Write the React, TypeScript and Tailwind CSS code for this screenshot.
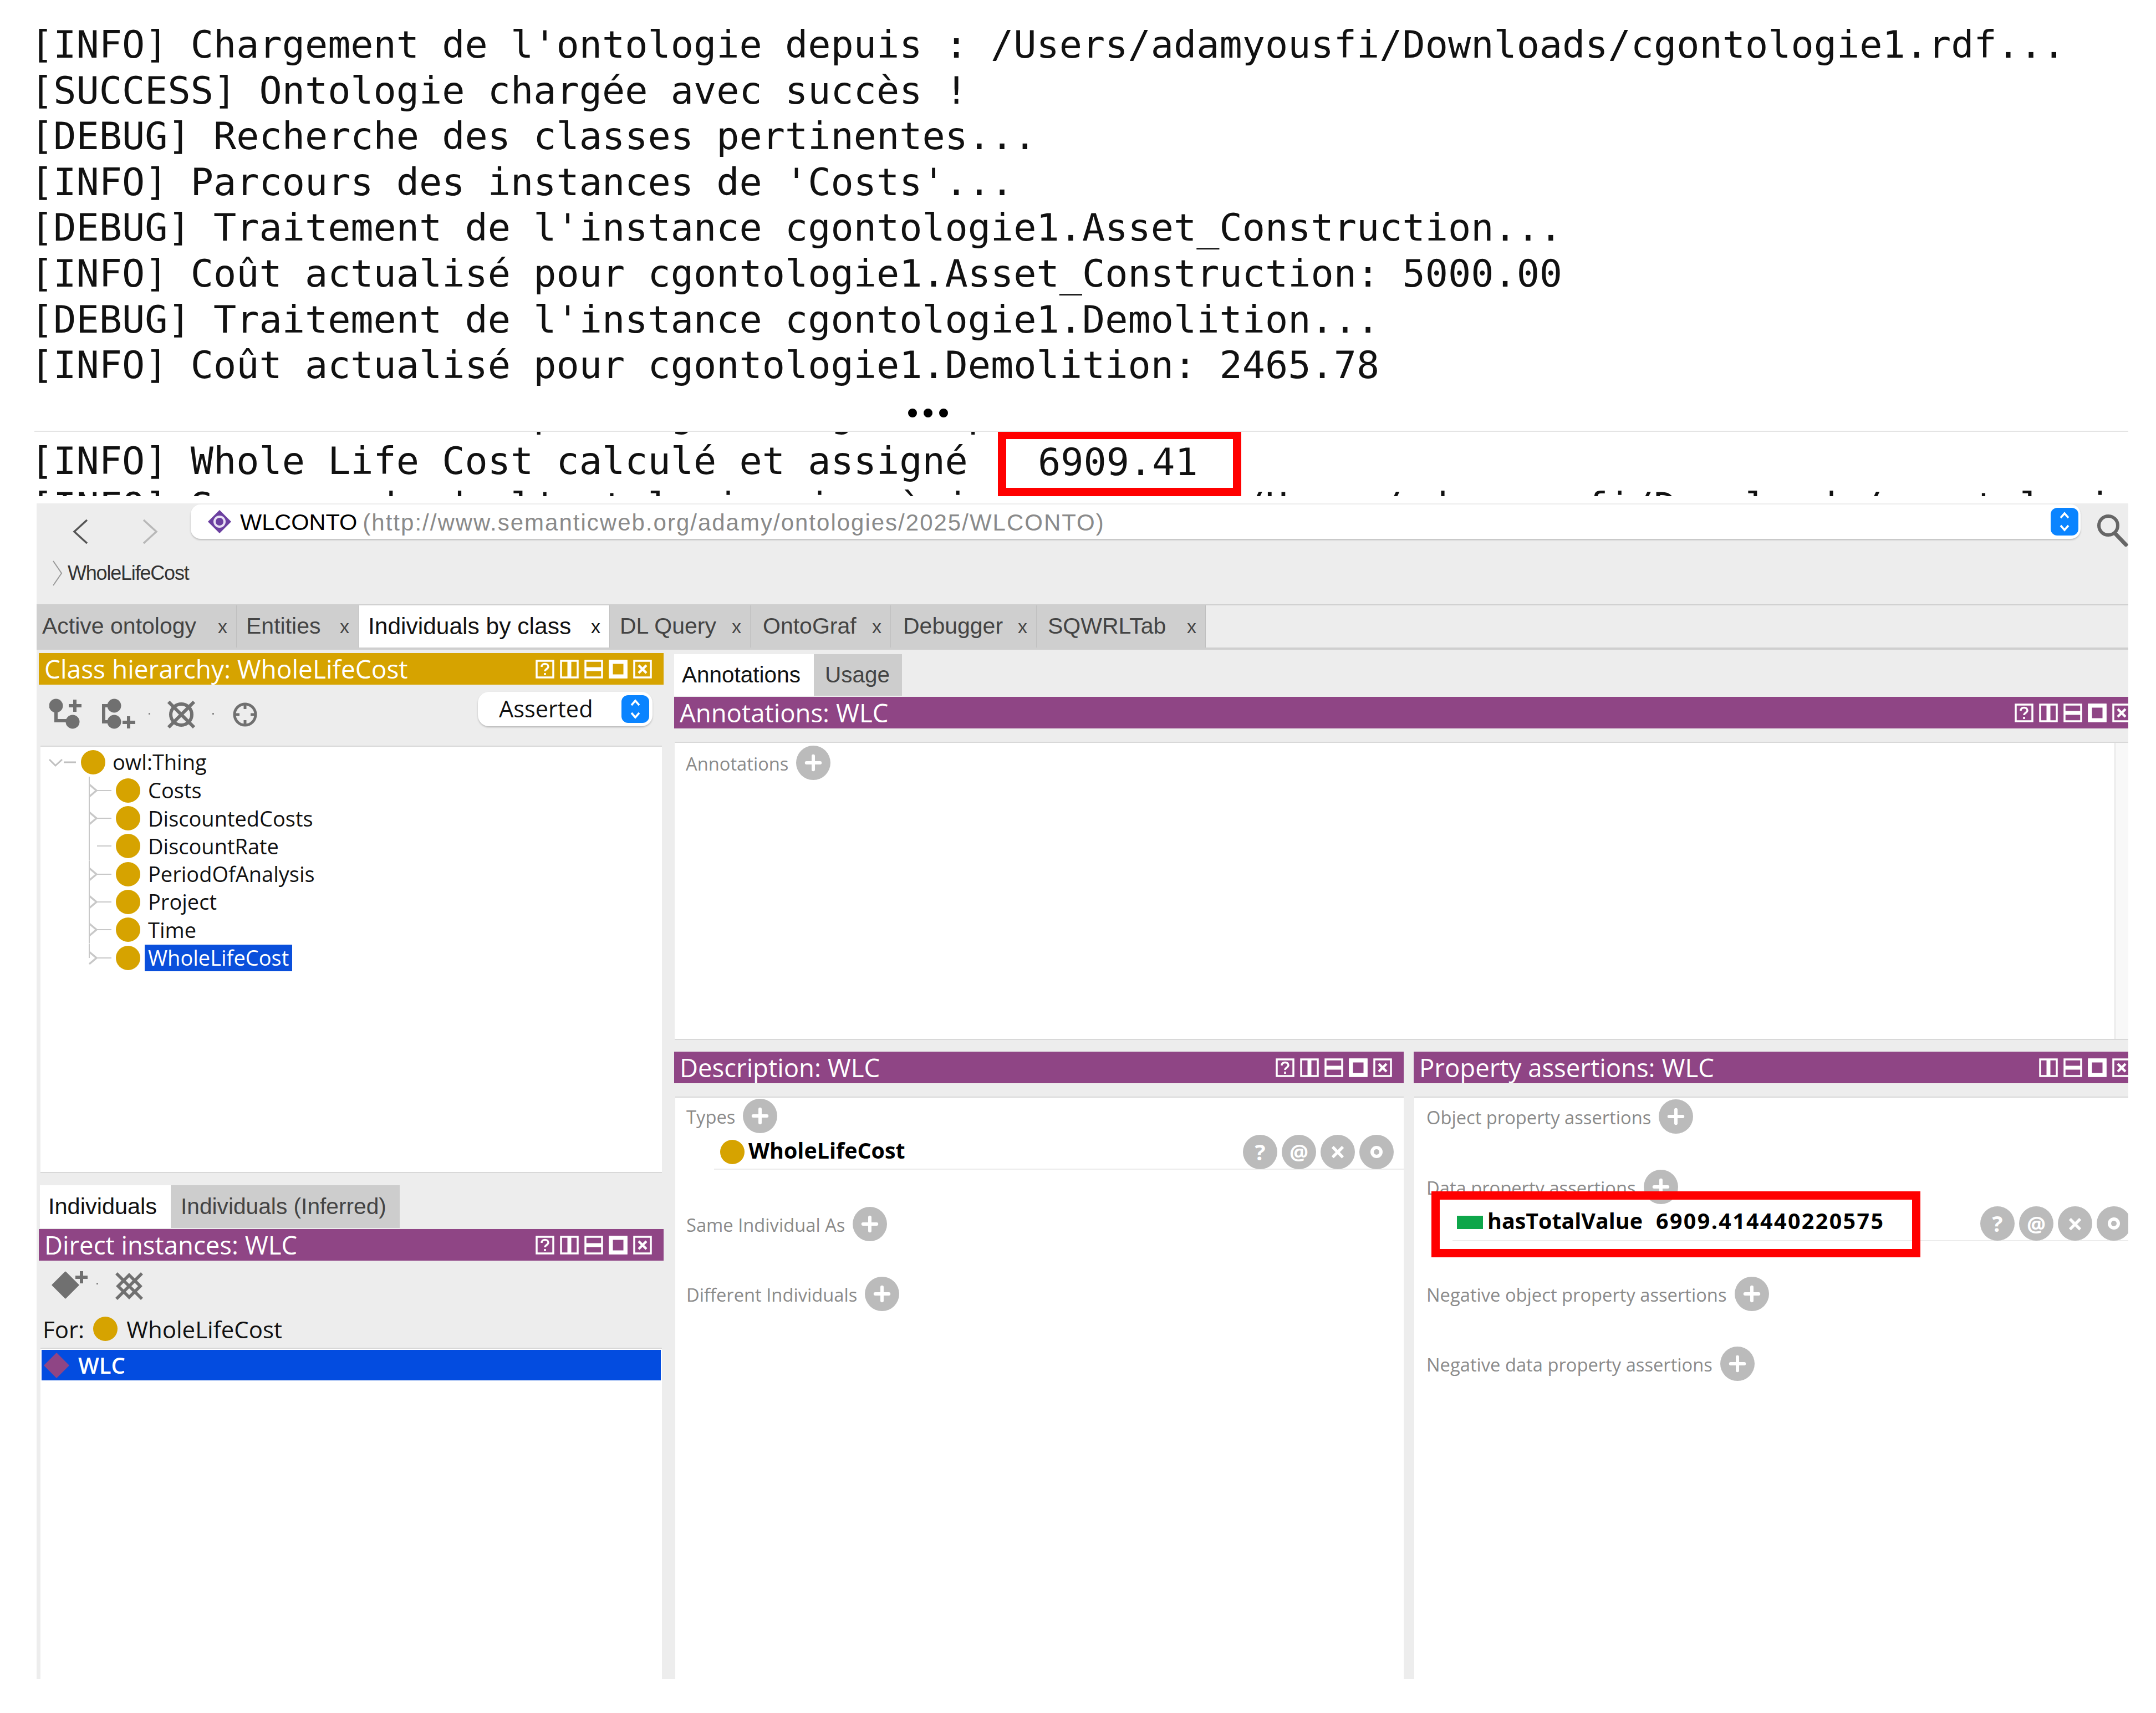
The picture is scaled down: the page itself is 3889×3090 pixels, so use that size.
import { Plus } from 'lucide-react';

const LOG_LINES = [
  "[INFO] Chargement de l'ontologie depuis : /Users/adamyousfi/Downloads/cgontologie1.rdf...",
  '[SUCCESS] Ontologie chargée avec succès !',
  '[DEBUG] Recherche des classes pertinentes...',
  "[INFO] Parcours des instances de 'Costs'...",
  "[DEBUG] Traitement de l'instance cgontologie1.Asset_Construction...",
  '[INFO] Coût actualisé pour cgontologie1.Asset_Construction: 5000.00',
  "[DEBUG] Traitement de l'instance cgontologie1.Demolition...",
  '[INFO] Coût actualisé pour cgontologie1.Demolition: 2465.78',
];

const TABS = [
  { label: 'Active ontology', w: 'w-[361px]', pad: 'pl-[10px]' },
  { label: 'Entities', w: 'w-[220px]', pad: 'pl-[17px]' },
  { label: 'Individuals by class', w: 'w-[453px]', pad: 'pl-[17px]', active: true },
  { label: 'DL Query', w: 'w-[254px]', pad: 'pl-[18px]' },
  { label: 'OntoGraf', w: 'w-[253px]', pad: 'pl-[22px]' },
  { label: 'Debugger', w: 'w-[263px]', pad: 'pl-[22px]' },
  { label: 'SQWRLTab', w: 'w-[305px]', pad: 'pl-[20px]' },
];

const TREE = [
  { label: 'Costs', arrow: true },
  { label: 'DiscountedCosts', arrow: true },
  { label: 'DiscountRate', arrow: false },
  { label: 'PeriodOfAnalysis', arrow: true },
  { label: 'Project', arrow: true },
  { label: 'Time', arrow: true },
  { label: 'WholeLifeCost', arrow: true, selected: true },
];

type BtnKind = 'help' | 'vsplit' | 'hsplit' | 'max' | 'close';

function HeaderBtn({ kind }: { kind: BtnKind }) {
  return (
    <svg viewBox="0 0 34 34" className="w-[34px] h-[34px] shrink-0" fill="none" stroke="#fff">
      <rect x="2" y="2" width="30" height="30" strokeWidth="3.5" />
      {kind === 'help' && (
        <>
          <path d="M11 13c0-4 3-5.500 6-5.500s6 1.500 6 5c0 4-6 4.500-6 8.500" strokeWidth="3.500" />
          <path d="M17 24v4" strokeWidth="3.500" />
        </>
      )}
      {kind === 'vsplit' && <path d="M17 2v30" strokeWidth="7" />}
      {kind === 'hsplit' && <path d="M2 17h30" strokeWidth="7" />}
      {kind === 'max' && <rect x="4" y="4" width="26" height="26" strokeWidth="7" />}
      {kind === 'close' && <path d="M10 10l14 14M24 10L10 24" strokeWidth="4.500" />}
    </svg>
  );
}

const ALL_BTNS: BtnKind[] = ['help', 'vsplit', 'hsplit', 'max', 'close'];

function PanelHeader({ title, gold, btns = ALL_BTNS, clipRight }: { title: string; gold?: boolean; btns?: BtnKind[]; clipRight?: boolean }) {
  return (
    <div className={`h-[57px] shrink-0 flex items-center pl-[10px] overflow-hidden ${gold ? 'bg-[#d6a300]' : 'bg-[#8f4585]'} ${clipRight ? 'pr-0' : 'pr-[21px]'}`}>
      <span className={`font-['Open_Sans',sans-serif] text-white whitespace-nowrap ${gold ? 'text-[46px]' : 'text-[45.500px]'}`}>{title}</span>
      <div className={`ml-auto flex gap-[10px] ${clipRight ? 'mr-[-5px]' : ''}`}>
        {btns.map((b) => (
          <HeaderBtn key={b} kind={b} />
        ))}
      </div>
    </div>
  );
}

function Stepper({ className }: { className: string }) {
  return (
    <div className={`bg-[#0a84ff] rounded-[12px] flex items-center justify-center ${className}`}>
      <svg viewBox="0 0 24 44" className="w-[24px] h-[44px]" fill="none" stroke="#fff" strokeWidth="3.500">
        <path d="M5 15l7-8 7 8M5 29l7 8 7-8" />
      </svg>
    </div>
  );
}

function ClassDot({ className = 'w-[44px] h-[44px]' }: { className?: string }) {
  return <div className={`rounded-full bg-[#d6a300] shrink-0 ${className}`} />;
}

function AddBtn() {
  return (
    <div className="w-[62px] h-[62px] rounded-full bg-[#bbbbbb] flex items-center justify-center shrink-0">
      <Plus size={42} strokeWidth={3.4} color="#fff" />
    </div>
  );
}

function SectionRow({ label }: { label: string }) {
  return (
    <div className="flex items-center h-[62px] gap-[14px] shrink-0">
      <span className="font-['Open_Sans',sans-serif] text-[32.700px] text-[#8a8a8a] whitespace-nowrap pt-[3px]">{label}</span>
      <AddBtn />
    </div>
  );
}

function ActionBtns() {
  const glyph = "w-[62px] h-[62px] rounded-full bg-[#bbbbbb] flex items-center justify-center text-white font-bold shrink-0 font-['Open_Sans',sans-serif]";
  return (
    <div className="flex gap-[8px] shrink-0">
      <div className={`${glyph} text-[40px]`}>?</div>
      <div className={`${glyph} text-[38px]`}>@</div>
      <div className={`${glyph} text-[50px]`}>×</div>
      <div className={glyph}>
        <div className="w-[22px] h-[22px] rounded-full border-[6px] border-white" />
      </div>
    </div>
  );
}

function HierarchyToolbar() {
  return (
    <div className="h-[110px] shrink-0 flex items-start relative">
      <svg viewBox="0 0 60 56" className="w-[60px] h-[56px] ml-[19px] mt-[25px]" fill="#707070" stroke="#707070">
        <circle cx="12" cy="13" r="12.500" stroke="none" />
        <circle cx="42" cy="42" r="12.500" stroke="none" />
        <path d="M12 20v20h26M46 2v22M35 13h23" fill="none" strokeWidth="6" />
      </svg>
      <svg viewBox="0 0 60 56" className="w-[60px] h-[56px] ml-[35px] mt-[25px]" fill="#707070" stroke="#707070">
        <circle cx="22" cy="13" r="12.500" stroke="none" />
        <circle cx="22" cy="42" r="12.500" stroke="none" />
        <path d="M22 13H3v29h19M48 32v22M37 43h23" fill="none" strokeWidth="6" />
      </svg>
      <div className="w-[3px] h-[3px] bg-[#888] ml-[24px] mt-[51px]" />
      <svg viewBox="0 0 50 50" className="w-[50px] h-[50px] ml-[31px] mt-[29px]" fill="none" stroke="#707070" strokeWidth="6">
        <circle cx="25" cy="25" r="19" />
        <path d="M2 2l46 46M48 2L2 48" />
      </svg>
      <div className="w-[3px] h-[3px] bg-[#888] ml-[31px] mt-[51px]" />
      <svg viewBox="0 0 44 44" className="w-[44px] h-[44px] ml-[34px] mt-[32px]" fill="none" stroke="#707070" strokeWidth="5">
        <circle cx="22" cy="22" r="19" />
        <path d="M22 3v9M22 32v9M3 22h9M32 22h9" />
      </svg>
      <div className="ml-auto mr-[20px] mt-[13px] w-[315px] h-[62px] bg-white rounded-[20px] shadow-[0_2px_3px_#bbbbbb] flex items-center pl-[38px]">
        <span className="font-['Open_Sans',sans-serif] text-[41.500px] text-[#111] leading-none">Asserted</span>
        <Stepper className="w-[50px] h-[50px] ml-auto mr-[6px]" />
      </div>
    </div>
  );
}

function TreeRow({ label, arrow, selected, last }: { label: string; arrow: boolean; selected?: boolean; last?: boolean }) {
  return (
    <div className="flex items-center h-[50.300px]">
      <svg viewBox="0 0 136 50" className="w-[136px] h-[50px] shrink-0" fill="none" stroke="#c8c8c8" strokeWidth="2">
        <path d={last ? 'M88 0v25' : 'M88 0v50'} />
        <path d="M102 25h26" />
        {arrow && <path d="M88 14l13 11-13 11" strokeWidth="3.500" />}
      </svg>
      <ClassDot />
      <span className={`font-['Open_Sans',sans-serif] text-[38px] whitespace-nowrap ml-[8px] px-[6px] h-[48px] flex items-center ${selected ? 'bg-[#0a4fdb] text-white' : 'text-[#111]'}`}>
        {label}
      </span>
    </div>
  );
}

function ClassTree() {
  return (
    <div className="h-[771px] shrink-0 mx-[3px] bg-white border-t-2 border-b-2 border-[#d8d8d8] pt-[2px] overflow-hidden">
      <div className="flex items-center h-[51.600px]">
        <svg viewBox="0 0 73 50" className="w-[73px] h-[50px] shrink-0" fill="none" stroke="#c0c0c0" strokeWidth="3">
          <path d="M16 20l11 11 12-11M42 25h22" />
        </svg>
        <ClassDot />
        <span className="font-['Open_Sans',sans-serif] text-[38px] text-[#111] ml-[13px]">owl:Thing</span>
      </div>
      {TREE.map((row, i) => (
        <TreeRow key={row.label} {...row} last={i === TREE.length - 1} />
      ))}
    </div>
  );
}

function InstancesPanel() {
  return (
    <>
      <div className="flex h-[77px] shrink-0 ml-[2px] mt-[22px] font-['Liberation_Sans',sans-serif]">
        <div className="w-[236px] bg-white text-[#111] text-[41.500px] flex items-center pl-[15px]">Individuals</div>
        <div className="w-[413px] bg-[#cdcdcd] text-[#444] text-[40.700px] flex items-center pl-[18px]">Individuals (Inferred)</div>
      </div>
      <div className="mt-[2px]">
        <PanelHeader title="Direct instances: WLC" />
      </div>
      <div className="h-[94px] shrink-0 flex items-start">
        <svg viewBox="0 0 70 50" className="w-[70px] h-[50px] ml-[23px] mt-[19px]" fill="#707070" stroke="#707070">
          <path d="M25 2L48 25 25 48 2 25z" strokeWidth="3" strokeLinejoin="round" />
          <path d="M54 0v22M43 11h22" fill="none" strokeWidth="6" />
        </svg>
        <div className="w-[3px] h-[3px] bg-[#888] ml-[11px] mt-[40px]" />
        <svg viewBox="0 0 50 50" className="w-[50px] h-[50px] ml-[31px] mt-[21px]" fill="none" stroke="#707070" strokeWidth="5.500">
          <path d="M25 5l20 20-20 20L5 25z" />
          <path d="M2 2l46 46M48 2L2 48" />
        </svg>
      </div>
      <div className="h-[63px] shrink-0 flex items-center pl-[7px] pb-[5px] font-['Open_Sans',sans-serif] text-[42px] text-[#111]">
        For:
        <ClassDot className="w-[44px] h-[44px] ml-[16px]" />
        <span className="ml-[16px]">WholeLifeCost</span>
      </div>
      <div className="flex-1 mx-[3px] bg-white border-t-2 border-[#d8d8d8] pt-[2px] px-[2px]">
        <div className="h-[55px] bg-[#034ce0] flex items-center pl-[3px]">
          <svg viewBox="0 0 48 48" className="w-[48px] h-[48px] shrink-0">
            <path d="M24 1l23 23-23 23L1 24z" fill="#8f4585" />
          </svg>
          <span className="font-['Open_Sans',sans-serif] font-semibold text-[40px] text-white ml-[15px]">WLC</span>
        </div>
      </div>
    </>
  );
}

function DescriptionPanel() {
  return (
    <div className="w-[1316px] shrink-0 flex flex-col">
      <PanelHeader title="Description: WLC" />
      <div className="mt-[24px] ml-[2px] flex-1 bg-white border-t-2 border-[#d8d8d8] pl-[20px] pt-[2px] flex flex-col">
        <SectionRow label="Types" />
        <div className="flex h-[63px] mt-[3px] items-center ml-[50px] pl-[11px] pr-[18px] border-b-2 border-[#ececec] shrink-0">
          <ClassDot />
          <span className="font-['Open_Sans',sans-serif] font-bold text-[39.400px] text-black ml-[7px] mb-[4px]">WholeLifeCost</span>
          <div className="ml-auto">
            <ActionBtns />
          </div>
        </div>
        <div className="mt-[67px]">
          <SectionRow label="Same Individual As" />
        </div>
        <div className="mt-[64px]">
          <SectionRow label="Different Individuals" />
        </div>
      </div>
    </div>
  );
}

function PropertyPanel() {
  return (
    <div className="flex-1 min-w-0 flex flex-col">
      <PanelHeader title="Property assertions: WLC" btns={['vsplit', 'hsplit', 'max', 'close']} clipRight />
      <div className="mt-[24px] ml-[1px] flex-1 bg-white border-t-2 border-[#d8d8d8] pl-[22px] pt-[3px] flex flex-col relative overflow-hidden">
        <SectionRow label="Object property assertions" />
        <div className="mt-[65px] h-[67px] shrink-0 overflow-hidden">
          <SectionRow label="Data property assertions" />
        </div>
        <div className="flex h-[62px] items-center ml-[47px] pl-[8px] mr-[-5px] border-b-2 border-[#ececec] shrink-0">
          <div className="w-[47px] h-[24px] bg-[#0ea64a] shrink-0 mb-[4px]" />
          <span className="font-['Open_Sans',sans-serif] font-bold text-[39.400px] text-black ml-[8px] mb-[8px]">hasTotalValue</span>
          <span className="font-['Open_Sans',sans-serif] font-bold text-[39.400px] tracking-[2.400px] text-black ml-[24px] mb-[8px]">6909.414440220575</span>
          <div className="ml-auto">
            <ActionBtns />
          </div>
        </div>
        <div className="mt-[64px]">
          <SectionRow label="Negative object property assertions" />
        </div>
        <div className="mt-[64px]">
          <SectionRow label="Negative data property assertions" />
        </div>
        <div className="absolute left-[31px] top-[169px] w-[882px] h-[119px] border-[15px] border-[#ff0000]" />
      </div>
    </div>
  );
}

function Protege() {
  return (
    <div className="ml-[66px] w-[3773px] h-[2121px] bg-[#ededed] flex flex-col overflow-hidden">
      <div className="h-[182px] shrink-0 flex flex-col">
        <div className="flex items-start pt-[2px]">
          <svg viewBox="0 0 28 44" className="w-[28px] h-[44px] ml-[65px] mt-[27px] shrink-0" fill="none" stroke="#555" strokeWidth="3.500">
            <path d="M26 1L3 22l23 21" />
          </svg>
          <svg viewBox="0 0 28 44" className="w-[28px] h-[44px] ml-[98px] mt-[27px] shrink-0" fill="none" stroke="#b8b8b8" strokeWidth="3.500">
            <path d="M2 1l23 21L2 43" />
          </svg>
          <div className="ml-[59px] w-[3409px] h-[62px] shrink-0 bg-white rounded-[18px] shadow-[0_2px_3px_#bbbbbb] flex items-center pl-[31px] pr-[4px]">
            <svg viewBox="0 0 42 42" className="w-[42px] h-[42px] shrink-0">
              <path d="M21 0l21 21-21 21L0 21z" fill="#6b3fa0" />
              <circle cx="21" cy="21" r="11" fill="#e8e0f4" />
              <circle cx="21" cy="21" r="7" fill="#6b3fa0" />
            </svg>
            <span className="font-['Liberation_Sans',sans-serif] text-[41.500px] text-black ml-[16px] pt-[2px]">WLCONTO</span>
            <span className="font-['Liberation_Sans',sans-serif] text-[42px] tracking-[2px] text-[#8a8a8a] ml-[10px] pt-[2px]">(http://www.semanticweb.org/adamy/ontologies/2025/WLCONTO)</span>
            <Stepper className="w-[50px] h-[50px] ml-auto" />
          </div>
          <svg viewBox="0 0 58 58" className="w-[58px] h-[58px] ml-[28px] mt-[18px] shrink-0" fill="none" stroke="#666">
            <circle cx="22" cy="20" r="17" strokeWidth="6" />
            <path d="M34 34l22 23" strokeWidth="7" />
          </svg>
        </div>
        <div className="flex items-center mt-[25px] pl-[29px] h-[45px]">
          <svg viewBox="0 0 18 46" className="w-[18px] h-[46px] shrink-0" fill="none" stroke="#999" strokeWidth="2">
            <path d="M1 1l15 22L1 45" />
          </svg>
          <span className="font-['Liberation_Sans',sans-serif] text-[36px] tracking-[-1.200px] text-[#333] ml-[9px]">WholeLifeCost</span>
        </div>
      </div>

      <div className="flex h-[82px] shrink-0 border-t-2 border-b-[4px] border-[#cfcfcf] font-['Liberation_Sans',sans-serif]">
        {TABS.map((t) => (
          <div
            key={t.label}
            className={`${t.w} ${t.pad} shrink-0 pr-[16px] flex items-center justify-between whitespace-nowrap border-r border-[#c0c0c0] ${t.active ? 'bg-white text-[#111]' : 'bg-[#cfcfcf] text-[#444]'}`}
          >
            <span className={t.active ? 'text-[42.500px]' : 'text-[41px]'}>{t.label}</span>
            <span className="text-[34px]">x</span>
          </div>
        ))}
      </div>

      <div className="flex-1 min-h-0 flex pl-[4px] gap-[19px]">
        <div className="w-[1127px] shrink-0 flex flex-col pt-[6px]">
          <PanelHeader title="Class hierarchy: WholeLifeCost" gold />
          <HierarchyToolbar />
          <ClassTree />
          <InstancesPanel />
        </div>

        <div className="flex-1 min-w-0 flex flex-col pt-[8px]">
          <div className="flex h-[75px] shrink-0 font-['Liberation_Sans',sans-serif] text-[40.500px]">
            <div className="w-[252px] bg-white text-[#111] flex items-center pl-[14px]">Annotations</div>
            <div className="w-[159px] bg-[#cdcdcd] text-[#444] flex items-center pl-[20px]">Usage</div>
          </div>
          <div className="mt-[2px]">
            <PanelHeader title="Annotations: WLC" clipRight />
          </div>
          <div className="mt-[24px] h-[538px] shrink-0 ml-[1px] bg-white border-t-2 border-b-2 border-[#d8d8d8] flex">
            <div className="flex-1 pl-[20px] pt-[5px]">
              <SectionRow label="Annotations" />
            </div>
            <div className="w-[25px] border-l-2 border-[#e6e6e6] bg-[#f8f8f8]" />
          </div>
          <div className="mt-[21px] flex-1 min-h-0 flex gap-[18px]">
            <DescriptionPanel />
            <PropertyPanel />
          </div>
        </div>
      </div>
    </div>
  );
}

export default function App() {
  return (
    <div className="w-[3889px] h-[3090px] bg-white overflow-hidden">
      <div className="font-['DejaVu_Sans_Mono',monospace] text-[68.500px] leading-[82.600px] text-[#111] whitespace-pre">
        <div className="h-[777px] pl-[55px] pt-[39px]">
          {LOG_LINES.map((line) => (
            <div key={line}>{line}</div>
          ))}
          <div className="flex justify-center gap-[12px] mt-[37px] w-[3237px]">
            <div className="w-[16px] h-[16px] rounded-full bg-black" />
            <div className="w-[16px] h-[16px] rounded-full bg-black" />
            <div className="w-[16px] h-[16px] rounded-full bg-black" />
          </div>
        </div>
        <div className="relative ml-[62px] w-[3777px] h-[118px] overflow-hidden border-t-2 border-[#e4e4e4]">
          <div className="mt-[-74px] ml-[-7px]">
            <div className="mb-[2px]">[INFO] Coût actualisé pour cgontologie1.Operation: 1443.63</div>
            <div>[INFO] Whole Life Cost calculé et assigné</div>
            <div>[INFO] Sauvegarde de l'ontologie mise à jour dans  : /Users/adamyousfi/Downloads/cgontologie1_updated.rdf</div>
          </div>
          <div className="absolute left-[1738px] top-[-2px] w-[439px] h-[118px] border-[15px] border-[#ff0000] bg-white flex items-center pl-[57px] pb-[5px]">
            6909.41
          </div>
        </div>
        <div className="h-[13px]" />
      </div>
      <Protege />
    </div>
  );
}
